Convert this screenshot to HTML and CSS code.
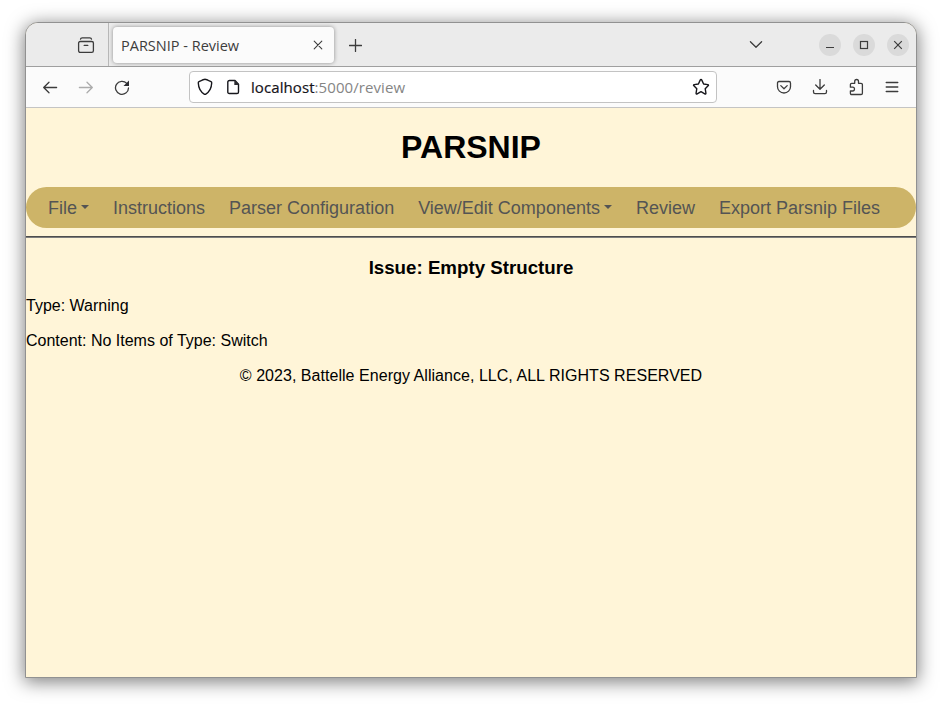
FILE: index.html
```html
<!DOCTYPE html>
<html lang="en">
<head>
<meta charset="utf-8">
<title>PARSNIP - Review</title>
<link rel="stylesheet" href="styles.css">
</head>
<body>
<div class="window">
  <div class="tabbar">
    <div class="view"><svg class="icon" width="18" height="18" viewBox="0 0 18 18"><path d="M3.5 3.2Q3.7 1.8 5.2 1.8H12.8Q14.3 1.8 14.5 3.2"/><rect x="1.6" y="5.5" width="14.8" height="10.9" rx="1.6"/><path d="M7.2 9.4H10.8"/></svg></div>
    <div class="tab">
      <span class="tab-title">PARSNIP - Review</span>
      <svg class="icon thin" width="10" height="10" viewBox="0 0 10 10"><path d="M1.2 1.2L8.8 8.8M8.8 1.2L1.2 8.8"/></svg>
    </div>
    <svg class="icon plus" width="13" height="13" viewBox="0 0 13 13"><path d="M6.5 .5V12.5M.5 6.5H12.5"/></svg>
    <svg class="icon chevron" width="14" height="9" viewBox="0 0 14 9"><path d="M1.4 1.7L7 7.3L12.6 1.7"/></svg>
    <div class="controls">
      <span class="control"><svg class="icon" width="22" height="22" viewBox="0 0 22 22"><path d="M7 13.5H15"/></svg></span>
      <span class="control"><svg class="icon" width="22" height="22" viewBox="0 0 22 22"><rect x="7.5" y="7.5" width="7" height="7"/></svg></span>
      <span class="control"><svg class="icon" width="22" height="22" viewBox="0 0 22 22"><path d="M7.2 7.2L14.8 14.8M14.8 7.2L7.2 14.8"/></svg></span>
    </div>
  </div>
  <div class="toolbar">
    <div class="history">
      <svg class="icon" width="16" height="16" viewBox="0 0 16 16"><path d="M14.6 8.5H1.7M7 3.2L1.7 8.5L7 13.8"/></svg>
      <svg class="icon disabled" width="16" height="16" viewBox="0 0 16 16"><path d="M1.4 8.5H14.3M9 3.2L14.3 8.5L9 13.8"/></svg>
      <svg class="icon" width="16" height="16" viewBox="0 0 16 16"><path d="M12.8 4.4A6.5 6.5 0 1 0 14.5 8.9"/><path class="solid" d="M15 1.6V7.1H9.5Z"/></svg>
    </div>
    <div class="address">
      <svg class="icon dark" width="16" height="18" viewBox="0 0 16 18"><path d="M8 1.3Q9 1.3 14 3.7Q14.8 4.1 14.7 5Q14.4 12.5 8.8 16.1Q8 16.6 7.2 16.1Q1.6 12.5 1.3 5Q1.2 4.1 2 3.7Q7 1.3 8 1.3Z"/></svg>
      <svg class="icon dark page-icon" width="13" height="16" viewBox="0 0 13 16"><path d="M2.5 1.5H8L11.5 5.2V12.9Q11.5 14.5 10 14.5H2.3Q.8 14.5 .8 12.9V3.1Q.8 1.5 2.5 1.5Z"/><path class="solid" d="M7.3 .9L12.2 5.9H7.3Z"/></svg>
      <span class="url"><span class="host">localhost</span><span class="path">:5000/review</span></span>
      <svg class="icon dark star" width="18" height="18" viewBox="0 0 18 18"><path d="M9 1.5Q9.5 1.5 9.8 2.1L11.6 6L15.8 6.6Q17 6.9 16.1 7.8L13.2 10.7L13.9 15Q14 16.4 12.8 15.8L9 13.7L5.2 15.8Q4 16.4 4.1 15L4.8 10.7L1.9 7.8Q1 6.9 2.2 6.6L6.4 6L8.2 2.1Q8.5 1.5 9 1.5Z"/></svg>
    </div>
    <div class="tools">
      <svg class="icon" width="16" height="16" viewBox="0 0 16 16"><path d="M3 2.5H13Q14.5 2.5 14.5 4V7.7A6.5 6.3 0 0 1 1.5 7.7V4Q1.5 2.5 3 2.5ZM4.8 6.6L8 9.7L11.2 6.6"/></svg>
      <svg class="icon" width="16" height="16" viewBox="0 0 16 16"><path d="M8 .5V10.2M3.7 6L8 10.3L12.3 6M1.5 11.5V13Q1.5 14.7 3.2 14.7H12.8Q14.5 14.7 14.5 13V11.5"/></svg>
      <svg class="icon" width="16" height="18" viewBox="0 0 16 18"><path d="M2.4 9.2V6.6Q2.4 5.3 3.7 5.3H6.7V3.4A1.8 1.8 0 0 1 10.5 3.4V5.3H13Q14.4 5.3 14.4 6.6V15.2Q14.4 16.5 13 16.5H3.7Q2.4 16.5 2.4 15.2V13H4.6A1.9 1.9 0 0 0 4.6 9.2H2.4Z"/></svg>
      <svg class="icon" width="14" height="12" viewBox="0 0 14 12"><path d="M1.2 1.5H12.8M1.2 6H12.8M1.2 10.5H12.8"/></svg>
    </div>
  </div>
  <main class="page">
    <h1>PARSNIP</h1>
    <nav class="menu">
      <span class="menu-item drop">File</span>
      <span class="menu-item">Instructions</span>
      <span class="menu-item">Parser Configuration</span>
      <span class="menu-item drop">View/Edit Components</span>
      <span class="menu-item">Review</span>
      <span class="menu-item">Export Parsnip Files</span>
    </nav>
    <hr>
    <h3>Issue: Empty Structure</h3>
    <p>Type: Warning</p>
    <p>Content: No Items of Type: Switch</p>
    <footer>© 2023, Battelle Energy Alliance, LLC, ALL RIGHTS RESERVED</footer>
  </main>
</div>
</body>
</html>
```
FILE: styles.css
```css
* { box-sizing: border-box; }
body {
  margin: 0;
  height: 706px;
  padding: 22px 25px 28px;
  background: #fff;
  overflow: hidden;
  font-family: "Liberation Sans", Arial, sans-serif;
}
.window {
  height: 656px;
  display: flex;
  flex-direction: column;
  border: 1px solid #919191;
  border-radius: 13px 13px 0 0;
  overflow: hidden;
  background: #fff5d8;
  box-shadow: 0 3px 18px 1px rgba(0, 0, 0, .5);
}
.icon {
  display: block;
  flex: none;
  fill: none;
  stroke: #3c3c3c;
  stroke-width: 1.3;
  stroke-linecap: round;
  stroke-linejoin: round;
}
.icon.dark { stroke: #17171c; stroke-width: 1.4; }
.icon.thin { stroke-width: 1.1; }
.icon.disabled { stroke: #acacac; }
.icon .solid { fill: #2c2c30; stroke: none; }

.tabbar {
  flex: none;
  height: 44px;
  display: flex;
  align-items: center;
  background: #ebebeb;
  border-bottom: 1px solid #9f9f9f;
}
.view {
  width: 83px;
  height: 43px;
  padding: 13px 0 0 51px;
  border-right: 1px solid #b8b8b8;
}
.tab {
  width: 221px;
  height: 36px;
  margin: 1px 0 0 4px;
  padding: 0 11px 0 8px;
  display: flex;
  align-items: center;
  justify-content: space-between;
  border-radius: 4px;
  background: #fbfbfb;
  box-shadow: 0 0 4px rgba(0, 0, 0, .4);
}
.tab-title {
  font: 14.5px "Open Sans", "Noto Sans", sans-serif;
  color: #3d3d3d;
  white-space: nowrap;
}
.plus { margin: 2px 0 0 15px; }
.chevron { margin-left: auto; }
.controls { display: flex; gap: 12px; margin: 0 7px 0 56px; }
.control { width: 22px; height: 22px; border-radius: 50%; background: #dadada; }
.control .icon { stroke-linecap: butt; stroke-linejoin: miter; stroke-width: 1.2; }

.toolbar {
  flex: none;
  height: 41px;
  display: flex;
  align-items: center;
  background: #fbfbfb;
  border-bottom: 1px solid #c4c4c4;
}
.history { display: flex; gap: 20px; margin-left: 16px; }
.address {
  width: 528px;
  height: 32px;
  margin-left: 59px;
  padding: 0 6px 0 7px;
  display: flex;
  align-items: center;
  border: 1px solid #c3c3c3;
  border-radius: 4px;
  background: #fff;
}
.page-icon { margin-left: 14px; }
.url {
  margin-left: 11px;
  font: 15px "Open Sans", "Noto Sans", sans-serif;
  letter-spacing: .08px;
  white-space: nowrap;
}
.host { color: #15141a; -webkit-text-stroke: .2px #15141a; }
.path { color: #858585; }
.star { margin-left: auto; }
.tools { display: flex; align-items: center; gap: 20px; margin-left: 59px; }
.tools .icon:last-child { margin-left: 1px; }

.page { flex: 1; color: #000; }
h1 {
  margin: 21px 0;
  font-size: 32px;
  line-height: 37px;
  text-align: center;
}
.menu {
  height: 41px;
  padding: 2px 0 0 22px;
  display: flex;
  align-items: center;
  gap: 24px;
  border-radius: 21px;
  background: #cdb468;
}
.menu-item {
  display: flex;
  align-items: center;
  color: #545454;
  font-size: 18px;
  white-space: nowrap;
}
.drop::after {
  content: "";
  margin: -3px 0 0 4px;
  border: 4px solid transparent;
  border-top-color: #545454;
  border-bottom: 0;
}
hr {
  height: 2px;
  margin: 8px 0 0;
  border: 0;
  border-top: 1px solid #4d4d4d;
  background: #7d7d7d;
}
h3 {
  margin: 19px 0 0;
  font-size: 18.72px;
  line-height: 21px;
  text-align: center;
}
p, footer {
  margin: 16px 0 0;
  font-size: 16px;
  line-height: 19px;
}
h3 + p { margin-top: 18px; }
footer { text-align: center; letter-spacing: .04px; }
```
